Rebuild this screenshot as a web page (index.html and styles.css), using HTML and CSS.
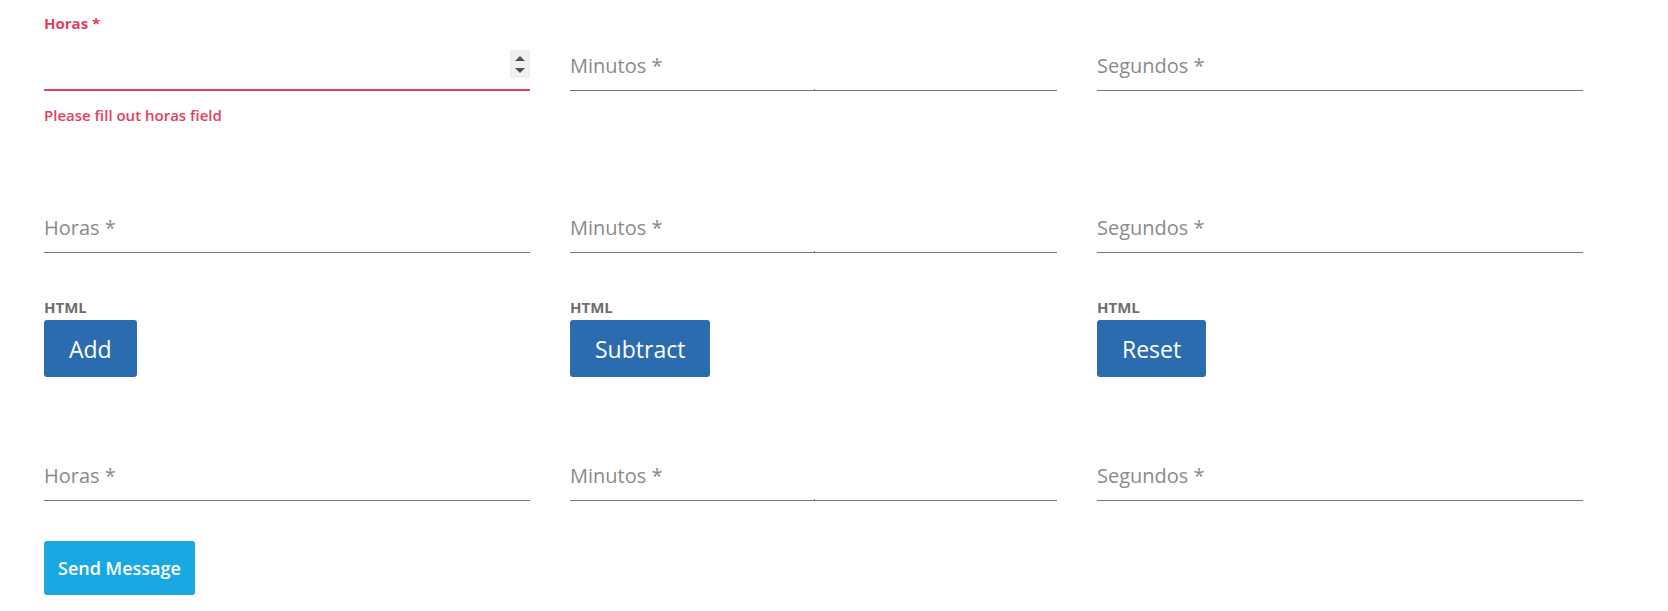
FILE: index.html
```html
<!DOCTYPE html>
<html lang="es">
<head>
  <meta charset="utf-8">
  <title>Calculadora de tiempo</title>
  <link rel="stylesheet" href="styles.css">
</head>
<body>
  <form class="calc" novalidate>
    <div class="row row-first">
      <div class="group">
        <div class="field is-invalid">
          <label class="float-label" for="h1">Horas *</label>
          <input class="field-input" id="h1" type="text" aria-label="Horas">
          <span class="spinner" aria-hidden="true"><span class="tri tri-up"></span><span class="tri tri-down"></span></span>
        </div>
        <p class="error">Please fill out horas field</p>
      </div>
      <div class="group">
        <div class="field">
          <span class="float-label"></span>
          <input class="field-input" type="text" placeholder="Minutos *">
          <span class="focus-dot"></span>
        </div>
      </div>
      <div class="group">
        <div class="field">
          <span class="float-label"></span>
          <input class="field-input" type="text" placeholder="Segundos *">
        </div>
      </div>
    </div>

    <div class="row row-second">
      <div class="group">
        <div class="field">
          <span class="float-label"></span>
          <input class="field-input" type="text" placeholder="Horas *">
        </div>
      </div>
      <div class="group">
        <div class="field">
          <span class="float-label"></span>
          <input class="field-input" type="text" placeholder="Minutos *">
          <span class="focus-dot"></span>
        </div>
      </div>
      <div class="group">
        <div class="field">
          <span class="float-label"></span>
          <input class="field-input" type="text" placeholder="Segundos *">
        </div>
      </div>
    </div>

    <div class="row row-actions">
      <div class="action">
        <span class="action-label">HTML</span>
        <button class="btn" type="button">Add</button>
      </div>
      <div class="action">
        <span class="action-label">HTML</span>
        <button class="btn" type="button">Subtract</button>
      </div>
      <div class="action">
        <span class="action-label">HTML</span>
        <button class="btn" type="button">Reset</button>
      </div>
    </div>

    <div class="row row-third">
      <div class="group">
        <div class="field">
          <span class="float-label"></span>
          <input class="field-input" type="text" placeholder="Horas *">
        </div>
      </div>
      <div class="group">
        <div class="field">
          <span class="float-label"></span>
          <input class="field-input" type="text" placeholder="Minutos *">
          <span class="focus-dot"></span>
        </div>
      </div>
      <div class="group">
        <div class="field">
          <span class="float-label"></span>
          <input class="field-input" type="text" placeholder="Segundos *">
        </div>
      </div>
    </div>

    <button class="btn-send" type="submit">Send Message</button>
  </form>
</body>
</html>
```

FILE: styles.css
```css
* {
  box-sizing: border-box;
}

body {
  margin: 0;
  background: #ffffff;
  font-family: "Open Sans", "Noto Sans", sans-serif;
}

.calc {
  padding: 13px 0 0 44px;
}

.row {
  display: grid;
  grid-template-columns: 486px 487px 486px;
  column-gap: 40px;
  align-items: start;
}

.row-first {
  margin-bottom: 49px;
}

.row-second {
  margin-bottom: 45px;
}

.row-actions {
  margin-bottom: 46px;
}

.row-third {
  margin-bottom: 40px;
}

.field {
  position: relative;
  display: flex;
  flex-direction: column;
}

.float-label {
  display: block;
  height: 30px;
  font-size: 15px;
  font-weight: 700;
  line-height: 20px;
  color: #e2405f;
}

.field-input {
  display: block;
  width: 100%;
  height: 48px;
  margin: 0;
  padding: 0 0 3px 0;
  border: 0;
  border-bottom: 1px solid #757575;
  border-radius: 0;
  background: transparent;
  font-family: "Open Sans", "Noto Sans", sans-serif;
  font-size: 20px;
  color: #333333;
  outline: none;
}

.field-input::placeholder {
  color: #8a8a8a;
  opacity: 1;
}

.is-invalid .field-input {
  border-bottom: 2px solid #e2405f;
}

.spinner {
  position: absolute;
  right: 0;
  top: 37px;
  width: 20px;
  height: 28px;
  background: #f0f0f0;
  display: flex;
  flex-direction: column;
  align-items: center;
  justify-content: center;
  gap: 7px;
}

.tri {
  width: 0;
  height: 0;
  border-left: 5px solid transparent;
  border-right: 5px solid transparent;
}

.tri-up {
  border-bottom: 5px solid #505050;
}

.tri-down {
  border-top: 5px solid #505050;
}

.focus-dot {
  position: absolute;
  left: 50%;
  bottom: 1px;
  width: 1px;
  height: 1px;
  background: #1a9bd7;
}

.error {
  margin: 13px 0 0;
  font-size: 15px;
  font-weight: 600;
  line-height: 22px;
  color: #e2405f;
}

.action {
  display: flex;
  flex-direction: column;
  align-items: flex-start;
}

.action-label {
  display: block;
  font-size: 15px;
  font-weight: 700;
  line-height: 19px;
  color: #6e6e6e;
  margin-bottom: 3px;
}

.btn {
  height: 57px;
  padding: 0 25px;
  border: 0;
  border-radius: 3px;
  background: #2b6cb0;
  color: #ffffff;
  font-family: "Open Sans", "Noto Sans", sans-serif;
  font-size: 23px;
  cursor: pointer;
}

.btn-send {
  height: 54px;
  padding: 0 14px;
  border: 0;
  border-radius: 3px;
  background: #19a8e2;
  color: #ffffff;
  font-family: "Open Sans", "Noto Sans", sans-serif;
  font-size: 18px;
  font-weight: 600;
  cursor: pointer;
}
```
